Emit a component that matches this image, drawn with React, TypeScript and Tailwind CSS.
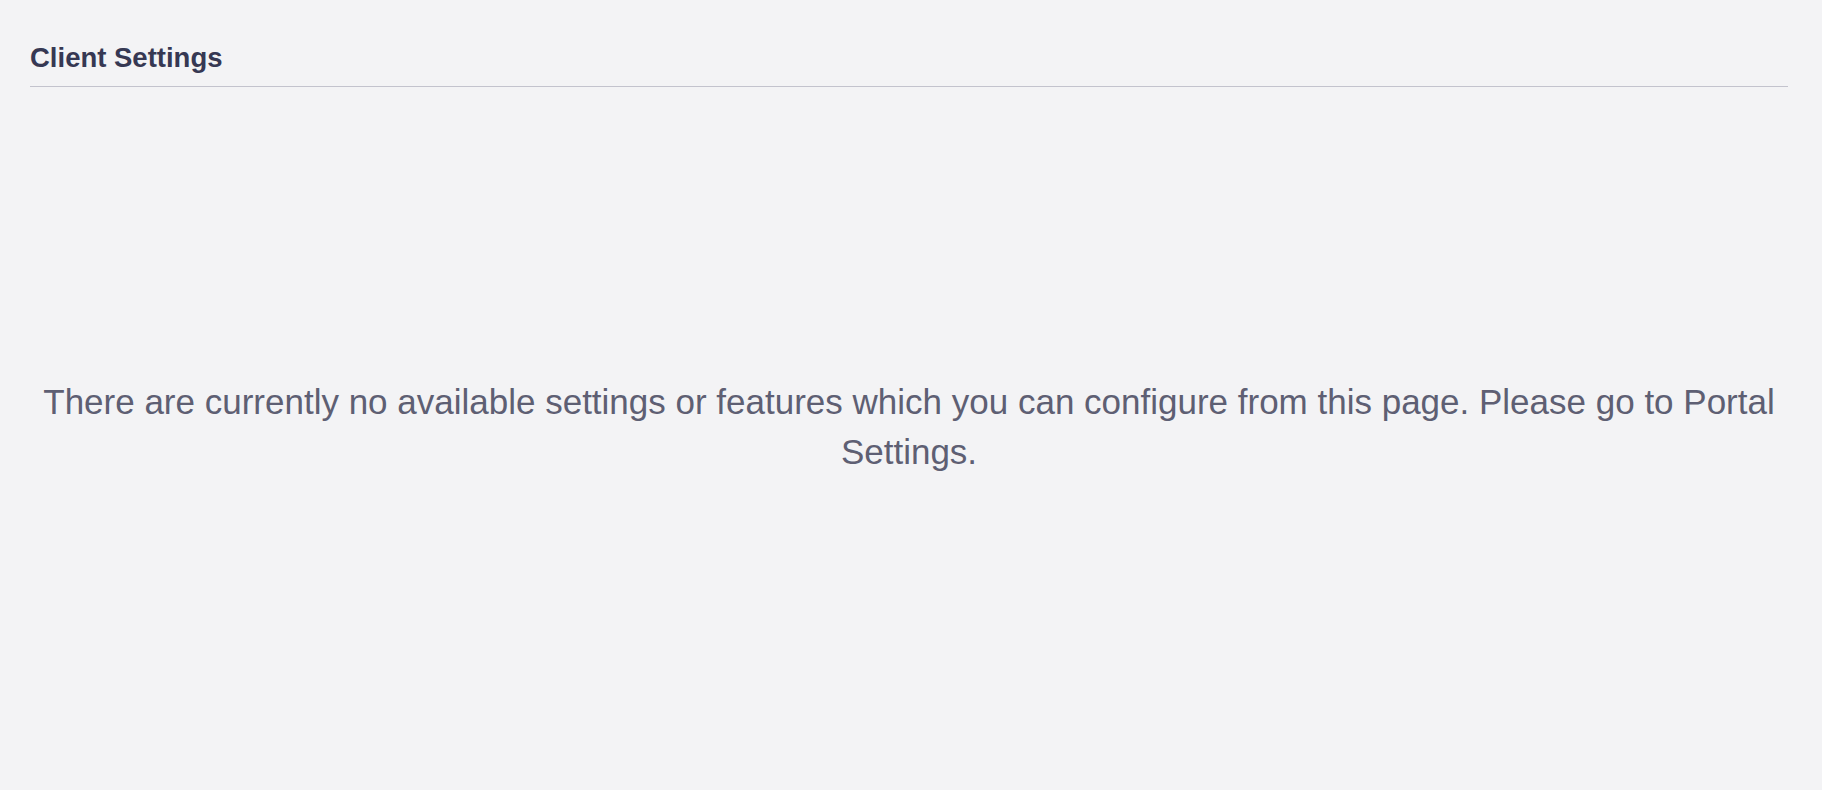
export default function App() {
  return (
    <div className="min-h-[790px] w-full bg-[#f3f3f5] pl-[30px] pr-[34px] pt-[42px] font-['Liberation_Sans',Arial,sans-serif]">
      <div className="border-b border-[#c3c3cd] pb-[13px]">
        <h1 className="text-[27.5px] font-bold leading-[31px] text-[#363853]">Client Settings</h1>
      </div>
      <div className="pt-[290px]">
        <p className="text-center text-[35px] leading-[50px] text-[#5e5f73]">
          There are currently no available settings or features which you can configure from this page. Please go to Portal Settings.
        </p>
      </div>
    </div>
  );
}
